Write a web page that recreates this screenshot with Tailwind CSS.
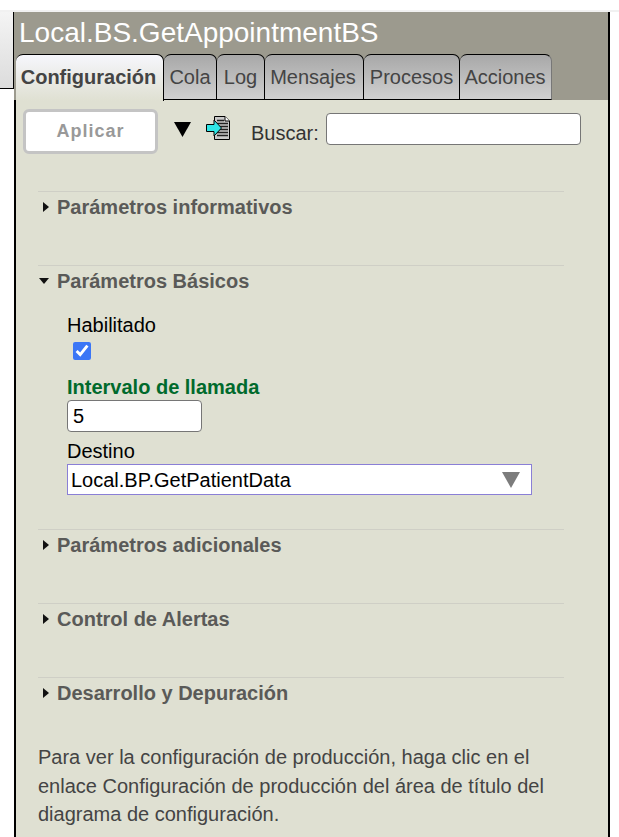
<!DOCTYPE html>
<html lang="es">
<head>
    <meta charset="UTF-8">
    <title>Local.BS.GetAppointmentBS</title>
    <script src="https://cdn.jsdelivr.net/npm/@tailwindcss/browser@4"></script>
</head>
<body class="bg-white font-['Liberation_Sans',Arial,sans-serif] h-[837px] overflow-hidden">
    <div class="h-[12px] bg-white border-b-2 border-[#f1f1f1]"></div>
    <div class="flex items-start">
        <!-- left strip of the diagram behind the panel -->
        <div class="w-[14px] h-[77px] shrink-0 bg-gradient-to-b from-[#f4f4f4] to-[#dcdcdc] border-r border-b border-black"></div>

        <div class="w-[596px] h-[825px] shrink-0 border-r-2 border-black flex flex-col">
            <!-- header -->
            <div class="bg-[#9c9a8e] h-[88px] pl-[2px]">
                <div class="text-white text-[28px] leading-[42px] pl-[3px]">Local.BS.GetAppointmentBS</div>
                <div class="flex h-[46px] items-stretch">
                    <div class="w-[148px] flex justify-center pt-[9px] pr-[2px] text-[20px] leading-[26px] font-bold text-[#444] bg-gradient-to-b from-[#f6f6fc] to-[#dfe0d2] border-t border-r border-black rounded-t-[7px] h-[47px] relative">Configuración</div>
                    <div class="w-[53px] flex justify-center pt-[9px] text-[20px] leading-[26px] text-[#444] bg-gradient-to-b from-[#a8a8a8] to-[#d0d0d0] border-t border-r border-b border-black rounded-t-[7px]">Cola</div>
                    <div class="w-[48px] flex justify-center pt-[9px] text-[20px] leading-[26px] text-[#444] bg-gradient-to-b from-[#a8a8a8] to-[#d0d0d0] border-t border-r border-b border-black rounded-t-[7px]">Log</div>
                    <div class="w-[99px] flex justify-center pt-[9px] pr-[2px] text-[20px] leading-[26px] text-[#444] bg-gradient-to-b from-[#a8a8a8] to-[#d0d0d0] border-t border-r border-b border-black rounded-t-[7px]">Mensajes</div>
                    <div class="w-[96px] flex justify-center pt-[9px] text-[20px] leading-[26px] text-[#444] bg-gradient-to-b from-[#a8a8a8] to-[#d0d0d0] border-t border-r border-b border-black rounded-t-[7px]">Procesos</div>
                    <div class="w-[92px] flex justify-center pt-[9px] pr-[1px] text-[20px] leading-[26px] text-[#444] bg-gradient-to-b from-[#a8a8a8] to-[#d0d0d0] border-t border-r border-b border-black border-r-[#777] rounded-t-[7px]">Acciones</div>
                </div>
            </div>

            <!-- content -->
            <div class="flex-1 bg-[#dfe0d2] border-l-2 border-black">
                <!-- toolbar -->
                <div class="flex items-start pl-[7px] pt-[9px] h-[91px]">
                    <button class="w-[135px] h-[45px] bg-white border-[3px] border-[#c4c4c4] rounded-[6px] text-[#999] text-[18px] font-bold tracking-[1px]">Aplicar</button>
                    <svg class="ml-[16px] mt-[12px]" width="17" height="17" viewBox="0 0 17 17"><polygon points="0,1 17,1 8.5,16" fill="#000"/></svg>
                    <svg class="ml-[15px] mt-[7px]" width="25" height="25" viewBox="0 0 25 25">
                        <path d="M8.5 0.5H19L23.5 5V23.5H8.5Z" fill="#c9c9c9" stroke="#000"/>
                        <path d="M19 0.5V5H23.5" fill="#fff" stroke="#000"/>
                        <path d="M11 4.5H18M11 7.5H22M11 10.5H22M11 13.5H22M11 16.5H22M11 19.5H22" stroke="#222" stroke-width="1.4"/>
                        <path d="M0.5 8.5H8V4L15.5 12L8 20V15.5H0.5Z" fill="#2fe6e6" stroke="#000"/>
                    </svg>
                    <label class="ml-[20px] mt-[10px] text-[20px] leading-[28px] text-[#333]">Buscar:</label>
                    <input type="text" class="ml-[7px] mt-[4px] w-[255px] h-[32px] bg-white border border-[#767676] rounded-[4px]">
                </div>

                <div class="mx-[22px] w-[526px]">
                    <section class="h-[74px] border-t border-[#cfcfc6]">
                        <div class="flex items-center h-[30px]">
                            <svg class="ml-[5px] mr-[8px]" width="6" height="10" viewBox="0 0 6 10"><polygon points="0,0 6,5 0,10" fill="#111"/></svg>
                            <h2 class="text-[20px] font-bold text-[#5a5a58]">Parámetros informativos</h2>
                        </div>
                    </section>

                    <section class="h-[264px] border-t border-[#cfcfc6]">
                        <div class="flex items-center h-[30px]">
                            <svg class="mr-[8px] ml-[1px]" width="10" height="6" viewBox="0 0 10 6"><polygon points="0,0 10,0 5,6" fill="#111"/></svg>
                            <h2 class="text-[20px] font-bold text-[#5a5a58]">Parámetros Básicos</h2>
                        </div>
                        <div class="pl-[29px] pt-[14px]">
                            <div class="text-[20px] leading-[30px] text-black">Habilitado</div>
                            <input type="checkbox" checked class="block ml-[6px] mt-[2px] w-[18px] h-[18px] accent-[#3b76f6]">
                            <div class="mt-[14px] text-[20px] leading-[26px] font-bold text-[#006a2c]">Intervalo de llamada</div>
                            <input type="text" value="5" class="block w-[135px] h-[32px] bg-white border border-[#767676] rounded-[4px] px-[5px] text-[20px] text-black">
                            <div class="mt-[7px] text-[20px] leading-[25px] text-black">Destino</div>
                            <div class="relative w-[465px] h-[31px]">
                                <select class="appearance-none w-full h-full bg-white border border-[#8a7fd6] pl-[3px] text-[20px] text-black">
                                    <option>Local.BP.GetPatientData</option>
                                </select>
                                <svg class="absolute right-[12px] top-[8px]" width="18" height="16" viewBox="0 0 18 16"><polygon points="0,0 18,0 9,16" fill="#7c7c7c"/></svg>
                            </div>
                        </div>
                    </section>

                    <section class="h-[74px] border-t border-[#cfcfc6]">
                        <div class="flex items-center h-[30px]">
                            <svg class="ml-[5px] mr-[8px]" width="6" height="10" viewBox="0 0 6 10"><polygon points="0,0 6,5 0,10" fill="#111"/></svg>
                            <h2 class="text-[20px] font-bold text-[#5a5a58]">Parámetros adicionales</h2>
                        </div>
                    </section>

                    <section class="h-[74px] border-t border-[#cfcfc6]">
                        <div class="flex items-center h-[30px]">
                            <svg class="ml-[5px] mr-[8px]" width="6" height="10" viewBox="0 0 6 10"><polygon points="0,0 6,5 0,10" fill="#111"/></svg>
                            <h2 class="text-[20px] font-bold text-[#5a5a58]">Control de Alertas</h2>
                        </div>
                    </section>

                    <section class="h-[66px] border-t border-[#cfcfc6]">
                        <div class="flex items-center h-[30px]">
                            <svg class="ml-[5px] mr-[8px]" width="6" height="10" viewBox="0 0 6 10"><polygon points="0,0 6,5 0,10" fill="#111"/></svg>
                            <h2 class="text-[20px] font-bold text-[#5a5a58]">Desarrollo y Depuración</h2>
                        </div>
                    </section>

                    <p class="w-[526px] text-[20px] leading-[28.5px] text-[#444]">Para ver la configuración de producción, haga clic en el enlace Configuración de producción del área de título del diagrama de configuración.</p>
                </div>
            </div>
        </div>
    </div>
</body>
</html>
